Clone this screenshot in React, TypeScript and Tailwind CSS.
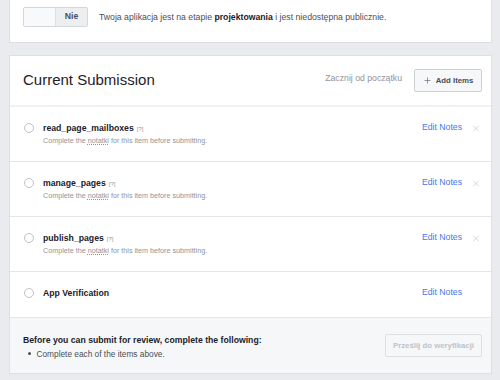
import { X, Plus } from 'lucide-react';

interface Item {
  name: string;
  note: boolean;
  removable: boolean;
}

const items: Item[] = [
  { name: 'read_page_mailboxes', note: true, removable: true },
  { name: 'manage_pages', note: true, removable: true },
  { name: 'publish_pages', note: true, removable: true },
  { name: 'App Verification', note: false, removable: false },
];

function ItemRow({ item, last }: { item: Item; last: boolean }) {
  return (
    <div
      className={`flex items-start pl-[14px] pr-[10px] pt-[15px] ${
        item.note ? 'h-[55px]' : 'h-[45px]'
      } ${last ? '' : 'border-b border-[#e5e6e9]'}`}
    >
      <span className="mt-[1px] w-[10px] h-[10px] rounded-full border border-[#bec2c9] bg-white shrink-0" />
      <div className="ml-[9px] flex-1">
        <div className="flex items-baseline h-[12px] leading-[12px]">
          <span className="font-bold text-[8.7px] text-[#1d2129]">{item.name}</span>
          {item.note && <span className="ml-[3px] text-[6px] text-[#90949c]">[?]</span>}
        </div>
        {item.note && (
          <p className="mt-[2px] text-[7.2px] leading-[10px] text-[#90949c]">
            Complete the <span className="underline decoration-dotted">notatki</span> for this item
            before submitting.
          </p>
        )}
      </div>
      <div className="flex items-center h-[12px]">
        <span className="text-[8.7px] text-[#4a76e8]">Edit Notes</span>
        <span className="w-[10px] ml-[9px] flex justify-center">
          {item.removable && <X size={13} strokeWidth={1.1} className="text-[#a8acb3]" />}
        </span>
      </div>
    </div>
  );
}

export default function App() {
  return (
    <div
      className="w-[500px] h-[380px] bg-[#e9ebee] overflow-hidden pl-[9px] pr-[8px]"
      style={{ fontFamily: '"Liberation Sans", Arial, sans-serif' }}
    >
      <div className="h-[43px] bg-white border-x border-b border-[#dddfe2] flex items-start pt-[7px] pl-[13px]">
        <div className="flex h-[20px] rounded-[2px] border border-[#d3d6db] overflow-hidden">
          <span className="w-[32px] bg-[#f8f9fa] border-r border-[#dddfe2]" />
          <span className="w-[31px] bg-[#edeef0] flex items-center justify-center font-bold text-[8.7px] text-[#4b4f56]">
            Nie
          </span>
        </div>
        <p className="ml-[11px] h-[20px] leading-[20px] text-[8.7px] text-[#4b4f56]">
          Twoja aplikacja jest na etapie <span className="font-bold text-[#1d2129]">projektowania</span> i
          jest niedostępna publicznie.
        </p>
      </div>

      <div className="mt-[12px] bg-white border border-[#dddfe2]">
        <div className="h-[51px] flex items-center pl-[13px] pr-[9px] border-b-2 border-[#f0f1f3]">
          <h1 className="flex-1 text-[15px] text-[#1d2129]">Current Submission</h1>
          <span className="text-[8.7px] text-[#90949c] mr-[12px] mt-[-4px]">Zacznij od początku</span>
          <button className="h-[23px] w-[68px] flex items-center justify-center gap-[4px] rounded-[2px] border border-[#ced0d4] bg-[#f6f7f9] text-[7.8px] font-bold text-[#4b4f56]">
            <Plus size={9} strokeWidth={1.5} />
            Add Items
          </button>
        </div>

        {items.map((item, i) => (
          <ItemRow key={item.name} item={item} last={i === items.length - 1} />
        ))}

        <div className="h-[56px] bg-[#f6f7f9] border-t border-[#e5e6e9] flex items-center pl-[13px] pr-[9px]">
          <div className="flex-1 pt-[2px]">
            <p className="font-bold text-[8.7px] leading-[12px] text-[#1d2129]">
              Before you can submit for review, complete the following:
            </p>
            <ul className="mt-[2px] text-[8.3px] leading-[12px] text-[#4b4f56]">
              <li className="flex items-center">
                <span className="w-[2.5px] h-[2.5px] rounded-full bg-[#4b4f56] ml-[5px] mr-[6px]" />
                Complete each of the items above.
              </li>
            </ul>
          </div>
          <button className="h-[23px] w-[97px] flex items-center justify-center rounded-[2px] border border-[#dddfe2] bg-[#f6f7f9] text-[7.8px] font-bold text-[#bec3c9]">
            Prześlij do weryfikacji
          </button>
        </div>
      </div>
    </div>
  );
}
